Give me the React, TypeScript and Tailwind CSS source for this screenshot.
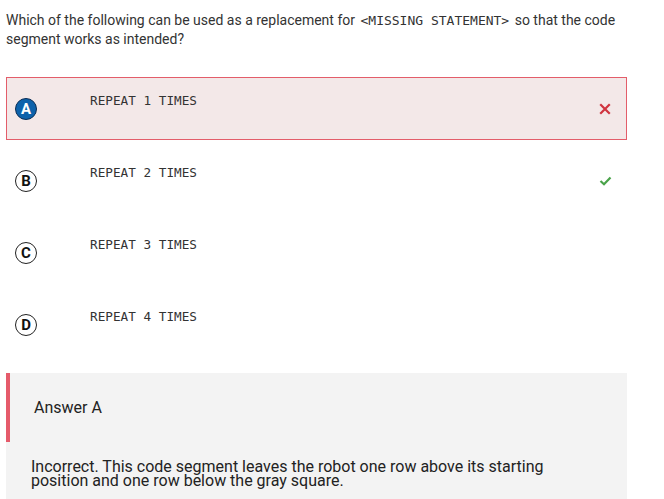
import React from 'react';

type Opt = { key: string; text: string; state?: 'wrong' | 'right' };

const options: Opt[] = [
  { key: 'A', text: 'REPEAT 1 TIMES', state: 'wrong' },
  { key: 'B', text: 'REPEAT 2 TIMES', state: 'right' },
  { key: 'C', text: 'REPEAT 3 TIMES' },
  { key: 'D', text: 'REPEAT 4 TIMES' },
];

const mono = "font-['DejaVu_Sans_Mono',monospace]";

const Cross = () => (
  <svg width="12" height="12" viewBox="0 0 12 12" fill="none">
    <path d="M2 2L10 10M10 2L2 10" stroke="#d0343f" strokeWidth="2.2" strokeLinecap="square" />
  </svg>
);

const Check = () => (
  <svg width="13" height="10" viewBox="0 0 13 10" fill="none">
    <path d="M1.5 5L5 8.3L11.5 1.5" stroke="#4aa34a" strokeWidth="2.2" />
  </svg>
);

const Option: React.FC<{ opt: Opt; selected: boolean }> = ({ opt, selected }) => (
  <div
    className={`flex items-start h-[63px] mb-[9px] border ${
      selected ? 'border-[#e35d6a] bg-[#f3e8e8]' : 'border-transparent'
    }`}
  >
    <div className="w-[83px] pl-[8px] pt-[20px] shrink-0">
      {selected ? (
        <div className="w-[22px] h-[22px] rounded-full bg-[#0d62ab] border border-[#0a2d55] flex items-center justify-center text-white text-[15px] font-bold leading-none">
          {opt.key}
        </div>
      ) : (
        <div className="w-[22px] h-[22px] rounded-full border border-[#222] flex items-center justify-center text-[#111] text-[15px] font-bold leading-none">
          {opt.key}
        </div>
      )}
    </div>
    <div className={`flex-1 pt-[15px] text-[12.7px] leading-[16px] text-[#333] ${mono}`}>{opt.text}</div>
    <div className="w-[27px] self-center flex justify-start">
      {opt.state === 'wrong' && <Cross />}
      {opt.state === 'right' && <Check />}
    </div>
  </div>
);

export default function App() {
  return (
    <div className="w-[664px] h-[499px] overflow-hidden bg-white font-['Roboto',sans-serif]">
      <div className="w-[621px] ml-[6px]">
        <p className="pt-[11px] text-[14px] leading-[19px] text-[#333]">
          Which of the following can be used as a replacement for{' '}
          <span className={`${mono} text-[13px] leading-[19px] px-[2px]`}>&lt;MISSING STATEMENT&gt;</span> so that the code
          segment works as intended?
        </p>
        <div className="mt-[28px]">
          {options.map((o) => (
            <Option key={o.key} opt={o} selected={o.key === 'A'} />
          ))}
        </div>
        <div className="mt-[17px] bg-[#f3f3f3] pb-[20px]">
          <div className="flex items-center h-[69px] border-l-4 border-[#e55b6b] pl-[24px] text-[16px] text-[#222]">
            Answer A
          </div>
          <p className="mt-[18px] pl-[25px] pr-[60px] text-[16px] leading-[14px] text-[#222]">
            Incorrect. This code segment leaves the robot one row above its starting position and one row below the gray square.
          </p>
        </div>
      </div>
    </div>
  );
}
